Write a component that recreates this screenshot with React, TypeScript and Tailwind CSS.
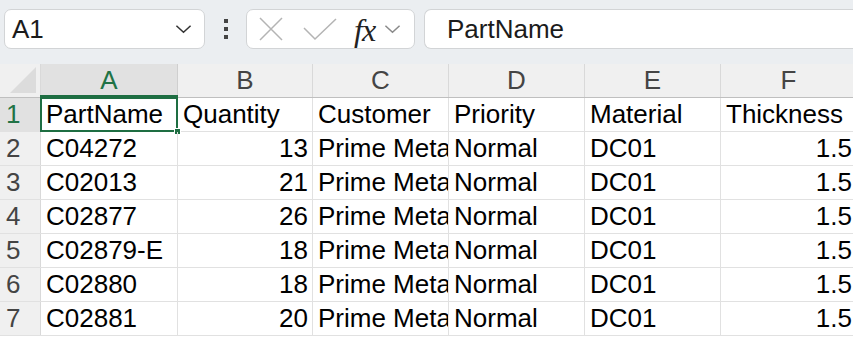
import React from "react";

const cols = [
  { key: "A", w: "w-[137px]" },
  { key: "B", w: "w-[135px]" },
  { key: "C", w: "w-[136px]" },
  { key: "D", w: "w-[136px]" },
  { key: "E", w: "w-[136px]" },
  { key: "F", w: "w-[136px]" },
];

type Cell = { v: string; right?: boolean };

const rows: Cell[][] = [
  [{ v: "PartName" }, { v: "Quantity" }, { v: "Customer" }, { v: "Priority" }, { v: "Material" }, { v: "Thickness" }],
  [{ v: "C04272" }, { v: "13", right: true }, { v: "Prime Metal" }, { v: "Normal" }, { v: "DC01" }, { v: "1.5", right: true }],
  [{ v: "C02013" }, { v: "21", right: true }, { v: "Prime Metal" }, { v: "Normal" }, { v: "DC01" }, { v: "1.5", right: true }],
  [{ v: "C02877" }, { v: "26", right: true }, { v: "Prime Metal" }, { v: "Normal" }, { v: "DC01" }, { v: "1.5", right: true }],
  [{ v: "C02879-E" }, { v: "18", right: true }, { v: "Prime Metal" }, { v: "Normal" }, { v: "DC01" }, { v: "1.5", right: true }],
  [{ v: "C02880" }, { v: "18", right: true }, { v: "Prime Metal" }, { v: "Normal" }, { v: "DC01" }, { v: "1.5", right: true }],
  [{ v: "C02881" }, { v: "20", right: true }, { v: "Prime Metal" }, { v: "Normal" }, { v: "DC01" }, { v: "1.5", right: true }],
];

function Chevron({ className }: { className?: string }) {
  return (
    <svg className={className} viewBox="0 0 18 10" fill="none" stroke="currentColor" strokeWidth="1.6">
      <path d="M1.5 1.5 L9 8.5 L16.5 1.5" />
    </svg>
  );
}

export default function App() {
  return (
    <div className="w-[853px] h-[342px] overflow-hidden bg-white font-['Liberation_Sans',Arial,sans-serif] text-[26px]">
      {/* formula bar */}
      <div className="h-[64px] bg-[#ebeef1] flex items-start pt-[9px] pl-[4px]">
        <div className="w-[201px] shrink-0 h-[40px] bg-white border border-[#d2d4d6] rounded-[7px] flex items-center pl-[7px] pr-[12px] text-[#1b1b1b]">
          <span className="flex-1">A1</span>
          <Chevron className="w-[17px] h-[10px] text-[#333]" />
        </div>
        <div className="w-[41px] shrink-0 h-[40px] flex flex-col items-center justify-center gap-[4px]">
          <div className="w-[4px] h-[4px] bg-[#444]" />
          <div className="w-[4px] h-[4px] bg-[#444]" />
          <div className="w-[4px] h-[4px] bg-[#444]" />
        </div>
        <div className="w-[169px] shrink-0 h-[40px] bg-white border border-[#d2d4d6] rounded-[7px] flex items-center pl-[12px]">
          <svg className="w-[24px] h-[24px] text-[#b4b4b4]" viewBox="0 0 24 24" fill="none" stroke="currentColor" strokeWidth="1.5">
            <path d="M1 1 L23 23 M23 1 L1 23" />
          </svg>
          <svg className="ml-[20px] w-[34px] h-[24px] text-[#b4b4b4]" viewBox="0 0 34 24" fill="none" stroke="currentColor" strokeWidth="1.5">
            <path d="M1 11 L12 22 L33 2" />
          </svg>
          <span className="ml-[17px] font-['Liberation_Serif',serif] italic text-[32px] leading-none text-[#222] tracking-[-1px] mt-[1px]">
            fx
          </span>
          <Chevron className="ml-[9px] w-[17px] h-[10px] text-[#8a8a8a]" />
        </div>
        <div className="ml-[9px] flex-1 h-[40px] bg-white border border-r-0 border-[#d2d4d6] rounded-l-[7px] flex items-center pl-[22px] text-[#1b1b1b]">
          PartName
        </div>
      </div>

      {/* column headers */}
      <div className="flex h-[34px] bg-[#f0f0f0] border-b border-[#bfbfbf] text-[#444]">
        <div className="w-[41px] shrink-0 h-full border-r border-[#d9d9d9] relative">
          <div className="absolute right-[4px] bottom-[4px] w-0 h-0 border-l-[26px] border-l-transparent border-b-[26px] border-b-[#dcdcdc]" />
        </div>
        {cols.map((c) =>
          c.key === "A" ? (
            <div
              key={c.key}
              className={`${c.w} h-full shrink-0 bg-[#e1e1e1] border-r border-[#cfcfcf] flex items-center justify-center text-[#217346] relative`}
            >
              {c.key}
              <div className="absolute -left-px -right-px -bottom-px h-[3px] bg-[#1e6e42]" />
            </div>
          ) : (
            <div key={c.key} className={`${c.w} h-full shrink-0 border-r border-[#d9d9d9] flex items-center justify-center`}>
              {c.key}
            </div>
          )
        )}
      </div>

      {/* rows */}
      {rows.map((r, ri) => (
        <div key={ri} className="flex h-[34px] border-b border-[#e1e1e1]">
          <div
            className={`w-[41px] h-full shrink-0 border-r border-[#d9d9d9] flex items-center pl-[6px] ${
              ri === 0 ? "bg-[#e1e1e1] text-[#217346]" : "bg-[#f0f0f0] text-[#444]"
            }`}
          >
            {ri + 1}
          </div>
          {r.map((cell, ci) => (
            <div
              key={ci}
              className={`${cols[ci].w} h-full shrink-0 border-r border-[#e1e1e1] flex items-center text-black whitespace-nowrap relative ${
                cell.right ? "justify-end pr-[4px]" : "pl-[5px]"
              } ${ci === 2 ? "overflow-hidden" : ""}`}
            >
              {cell.v}
              {ri === 0 && ci === 0 && (
                <>
                  <div className="absolute -left-px -top-px -right-px -bottom-px border-2 border-[#1e6e42]" />
                  <div className="absolute -right-[4px] -bottom-[4px] w-[7px] h-[7px] bg-[#1e6e42] border border-white" />
                </>
              )}
            </div>
          ))}
        </div>
      ))}
    </div>
  );
}
